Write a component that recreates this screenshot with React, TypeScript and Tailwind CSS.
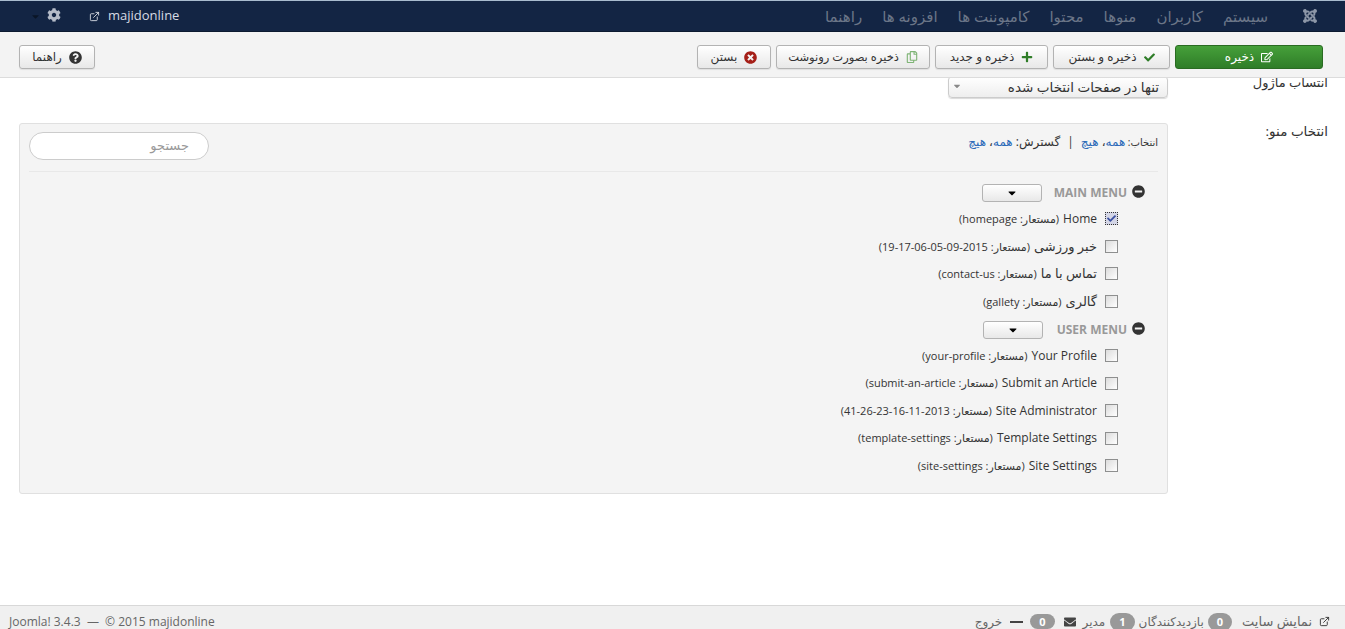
import type { ReactNode } from "react";
import { FaJoomla, FaCog, FaQuestionCircle, FaCheck, FaPlus, FaTimesCircle, FaMinusCircle, FaRegCopy, FaRegEdit, FaEnvelope, FaCaretDown } from "react-icons/fa";
import { FiExternalLink } from "react-icons/fi";

const navItems = ["سیستم", "کاربران", "منوها", "محتوا", "کامپوننت ها", "افزونه ها", "راهنما"];

const mainMenu = [
  { title: "Home", alias: "homepage", checked: true },
  { title: "خبر ورزشی", alias: "2015-09-05-06-17-19", fa: true },
  { title: "تماس با ما", alias: "contact-us", fa: true },
  { title: "گالری", alias: "gallety", fa: true },
];

const userMenu = [
  { title: "Your Profile", alias: "your-profile" },
  { title: "Submit an Article", alias: "submit-an-article" },
  { title: "Site Administrator", alias: "2013-11-16-23-26-41" },
  { title: "Template Settings", alias: "template-settings" },
  { title: "Site Settings", alias: "site-settings" },
];

function ToolButton({ icon, label, className }: { icon: ReactNode; label: string; className: string }) {
  return (
    <button className={`flex h-[24px] items-center justify-center gap-[7px] rounded-[3px] border border-[#b3b3b3] bg-gradient-to-b from-white to-[#e8e8e8] text-[#333] shadow-[0_1px_1px_rgba(0,0,0,0.08)] ${className}`}>
      {icon}
      <span>{label}</span>
    </button>
  );
}

function MenuRow({ title, alias, checked, fa }: { title: string; alias: string; checked?: boolean; fa?: boolean }) {
  return (
    <div className="flex h-[27.5px] items-center gap-[8px]">
      <span className={`relative block h-[13px] w-[13px] shrink-0 border ${checked ? "border-dotted border-[#333] bg-[#d4d6e6]" : "border-[#8e8f8f] bg-gradient-to-br from-[#dcdcdc] to-white"}`}>
        {checked && <FaCheck className="absolute left-[1px] top-[1px] text-[9px] text-[#3a4fa0]" />}
      </span>
      <span className={`${fa ? "text-[13px]" : "text-[12px]"} text-[#333]`}>
        {title}
        <span className="mr-[4px] text-[11px]">(مستعار: {alias})</span>
      </span>
    </div>
  );
}

function MenuHead({ name, gap }: { name: string; gap: string }) {
  return (
    <div className="flex h-[24px] items-center">
      <FaMinusCircle className="-mt-[3px] text-[13px] text-[#333]" />
      <span className="mr-[5px] text-[12px] font-bold text-[#999]">{name}</span>
      <button className={`flex h-[18px] w-[60px] items-center justify-center rounded-[3px] border border-[#b3b3b3] bg-gradient-to-b from-white to-[#e8e8e8] ${gap}`}>
        <FaCaretDown className="text-[12px] text-black" />
      </button>
    </div>
  );
}

function Pill({ value }: { value: number }) {
  return <span className="rounded-full bg-[#999] px-[9px] text-[11px] font-bold leading-[18px] text-white">{value}</span>;
}

export default function App() {
  return (
    <div dir="rtl" className="flex h-[629px] flex-col overflow-hidden bg-white font-['Open_Sans','DejaVu_Sans',sans-serif] text-[#333]">
      <header className="flex h-[32px] shrink-0 items-center border-t border-b border-t-[#a9bccf] border-b-[#0c1a30] bg-[#132544] pr-[27px] pl-[30px]">
        <FaJoomla className="text-[16px] text-[#8d97a8]" />
        <nav className="mr-[34px] flex items-center gap-[20px] text-[15px] text-[#6b7688]">
          {navItems.map((item) => (
            <span key={item}>{item}</span>
          ))}
        </nav>
        <div className="mr-auto flex items-center text-[13px] text-[#d6dbe3]">
          <span dir="ltr" className="flex items-center gap-[8px]">
            <FiExternalLink className="text-[11px]" />
            majidonline
          </span>
          <span className="mr-[28px] flex items-center gap-[6px]">
            <FaCog className="-mt-[2px] text-[14px] text-[#b5bcc8]" />
            <FaCaretDown className="text-[11px] text-[#0a1526]" />
          </span>
        </div>
      </header>

      <div className="flex h-[46px] shrink-0 items-center gap-[5px] border-b border-[#dcdcdc] bg-[#f3f3f3] pt-[5px] pr-[22px] pl-[19px]">
        <button className="flex h-[24px] w-[148px] items-center justify-center gap-[7px] rounded-[3px] border border-[#2a6b22] bg-gradient-to-b from-[#46a03a] to-[#2f7d28] text-[12px] text-white">
          <FaRegEdit className="text-[12px]" />
          <span>ذخیره</span>
        </button>
        <ToolButton className="w-[117px] text-[12px]" icon={<FaCheck className="text-[11px] text-[#2f7d28]" />} label="ذخیره و بستن" />
        <ToolButton className="w-[113px] text-[12px]" icon={<FaPlus className="text-[12px] text-[#2f7d28]" />} label="ذخیره و جدید" />
        <ToolButton className="w-[154px] text-[11.5px]" icon={<FaRegCopy className="text-[12px] text-[#7fb476]" />} label="ذخیره بصورت رونوشت" />
        <ToolButton className="w-[74px] text-[12px]" icon={<FaTimesCircle className="text-[13px] text-[#a51f18]" />} label="بستن" />
        <ToolButton className="mr-auto w-[76px] text-[12px]" icon={<FaQuestionCircle className="text-[13px] text-[#333]" />} label="راهنما" />
      </div>

      <main className="flex-1 overflow-hidden pr-[17px] pl-[19px]">
        <div className="flex h-[45px] items-start">
          <label className="-mt-[5px] w-[160px] text-[13px]">انتساب ماژول</label>
          <div className="-mt-[2px] flex h-[22px] w-[220px] items-center justify-between rounded-[4px] border border-[#ccc] bg-gradient-to-b from-white to-[#eee] pr-[8px] pl-[3px] text-[13.5px] shadow-[0_1px_1px_rgba(0,0,0,0.15)]">
            <span>تنها در صفحات انتخاب شده</span>
            <FaCaretDown className="-mt-[2px] text-[10px] text-[#888]" />
          </div>
        </div>
        <div className="flex items-start">
          <label className="-mt-[2px] w-[160px] text-[13.5px]">انتخاب منو:</label>
          <section className="h-[371px] w-[1149px] rounded-[3px] border border-[#e0e0e0] bg-[#f4f4f4] px-[9px]">
            <div className="flex h-[48px] items-center justify-between border-b border-[#e8e8e8] pb-[4px]">
              <div className="mb-[8px] text-[12px] text-[#333]">
                <span className="text-[10px]">انتخاب: </span>
                <a className="text-[#2a69b8]">همه</a>، <a className="text-[#2a69b8]">هیچ</a>
                <span className="mx-[7px]">|</span>
                گسترش: <a className="text-[#2a69b8]">همه</a>، <a className="text-[#2a69b8]">هیچ</a>
              </div>
              <div className="flex h-[28px] w-[180px] items-center rounded-full border border-[#ccc] bg-white pr-[19px] text-[13px] text-[#999]">جستجو</div>
            </div>
            <div className="pt-[9px]">
              <div className="mr-[13px]">
                <MenuHead name="MAIN MENU" gap="mr-[12px]" />
              </div>
              <div className="mr-[40px]">
                {mainMenu.map((row) => (
                  <MenuRow key={row.alias} {...row} />
                ))}
              </div>
              <div className="mr-[13px] mt-[3px]">
                <MenuHead name="USER MENU" gap="mr-[14px]" />
              </div>
              <div className="mr-[40px]">
                {userMenu.map((row) => (
                  <MenuRow key={row.alias} {...row} />
                ))}
              </div>
            </div>
          </section>
        </div>
      </main>

      <footer className="flex h-[24px] shrink-0 items-center justify-between border-t border-[#d8d8d8] bg-[#f0f0f0] pt-[8px] pr-[15px] pl-[9px] text-[12px] text-[#666]">
        <div className="flex items-center">
          <FiExternalLink className="text-[11px] text-[#333]" />
          <span className="mr-[7px] ml-[10px] text-[13px]">نمایش سایت</span>
          <Pill value={0} />
          <span className="mx-[4px]">بازدیدکنندگان</span>
          <Pill value={1} />
          <span className="mr-[5px] ml-[7px]">مدیر</span>
          <FaEnvelope className="text-[12px] text-[#444]" />
          <span className="mr-[9px]">
            <Pill value={0} />
          </span>
          <span className="mr-[7px] block h-[2px] w-[13px] bg-[#444]" />
          <span className="mr-[8px]">خروج</span>
        </div>
        <span dir="ltr">Joomla! 3.4.3 &nbsp;—&nbsp; © 2015 majidonline</span>
      </footer>
    </div>
  );
}
